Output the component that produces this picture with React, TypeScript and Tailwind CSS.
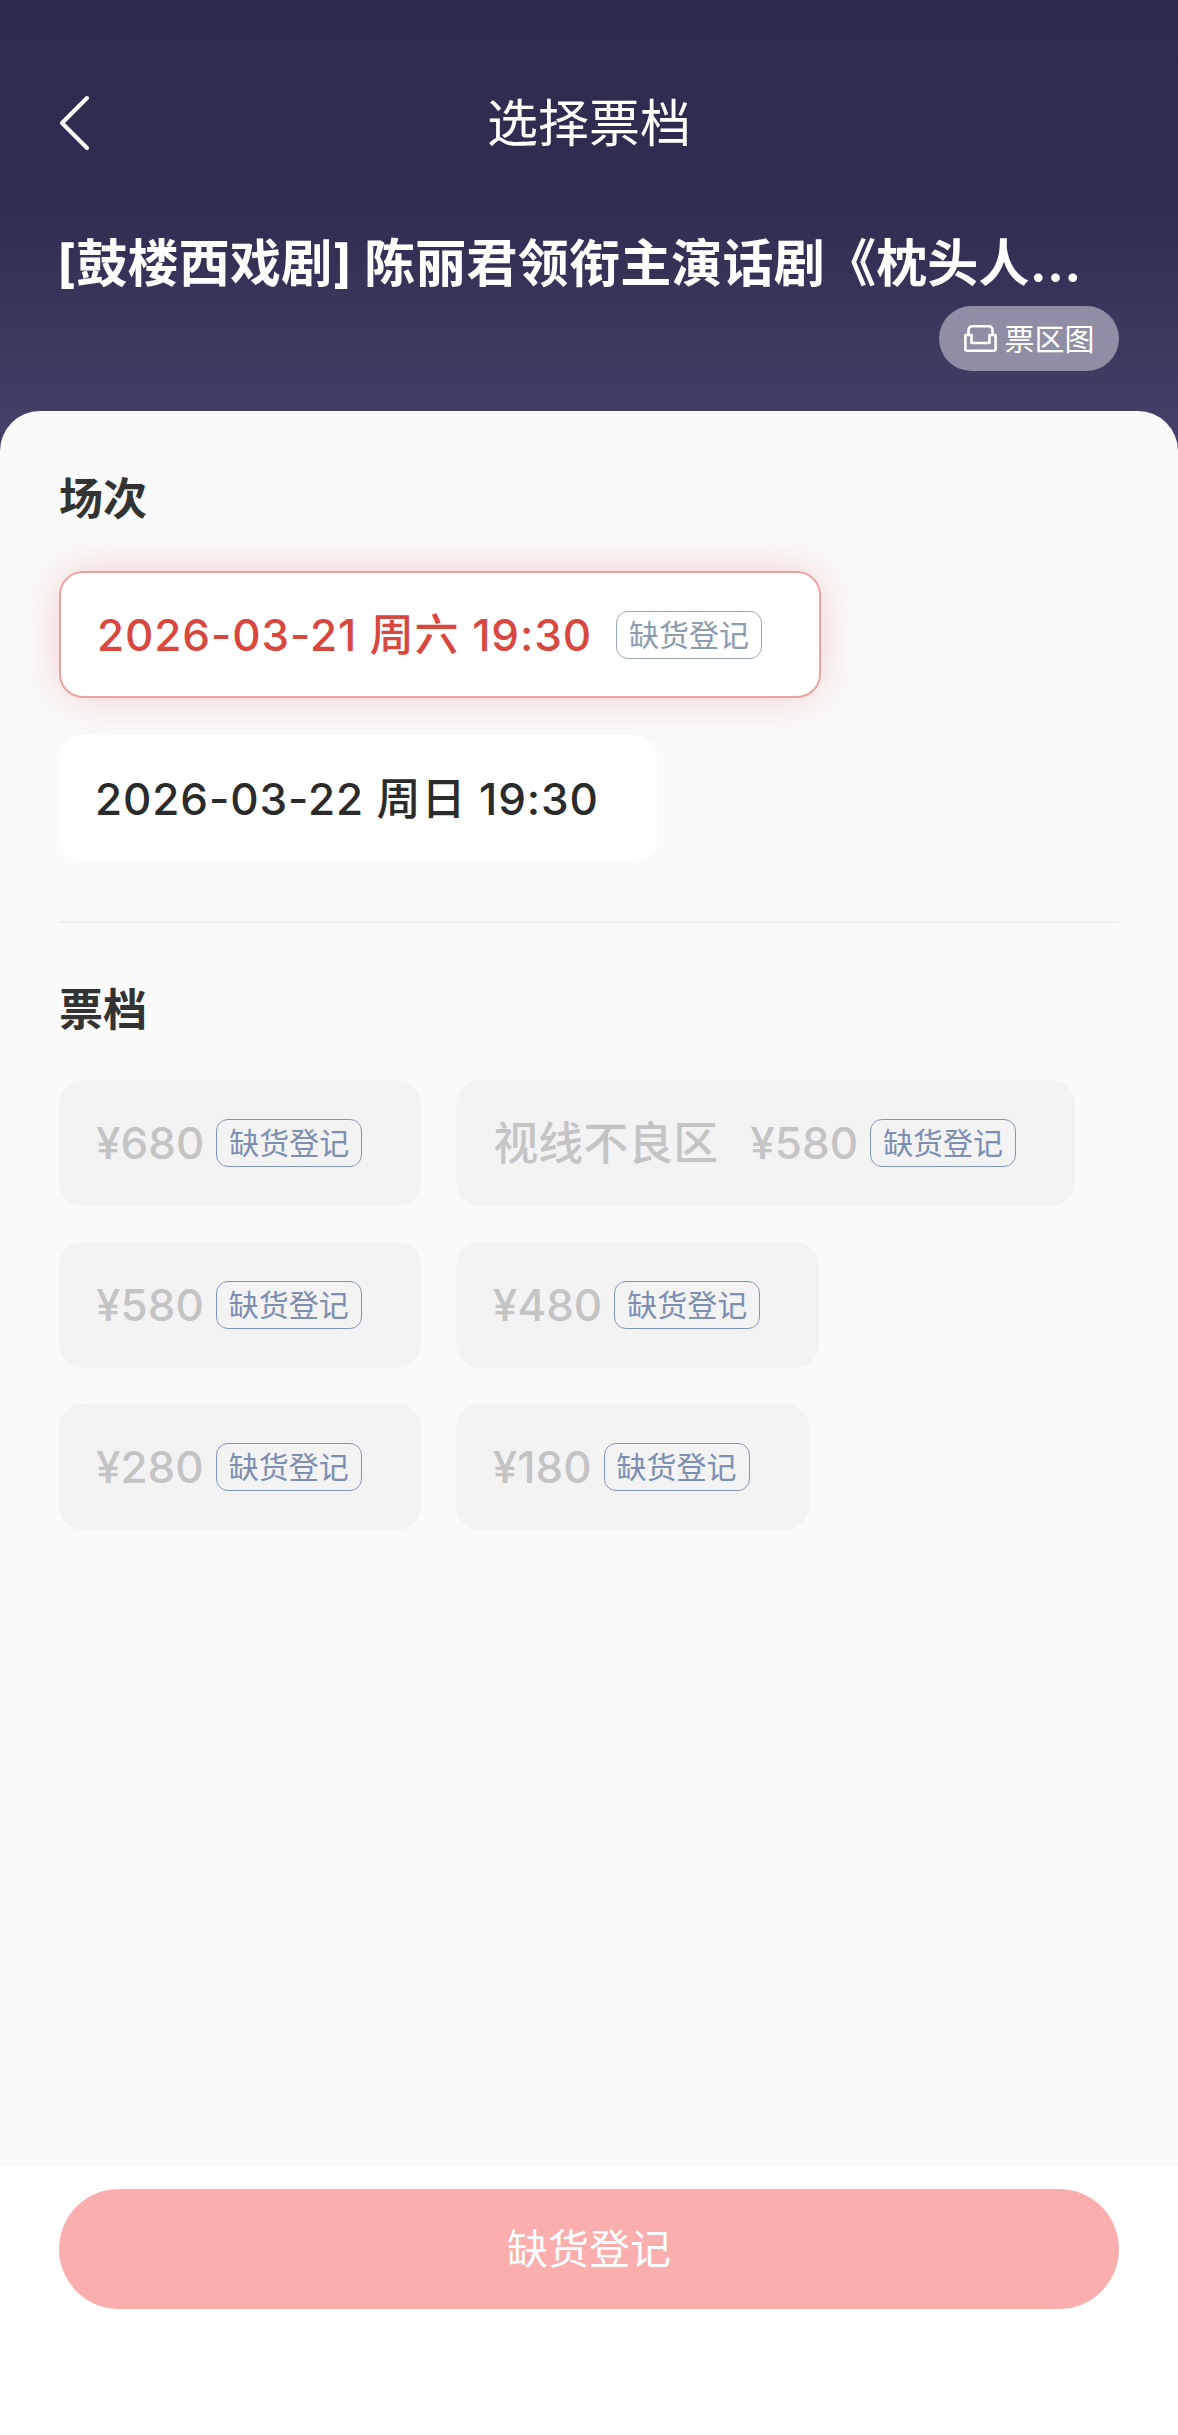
const FONT = "font-['Inter','Noto_Sans_CJK_SC',sans-serif]";

const tickets = [
  [{ label: '¥680' }, { label: '¥580', area: '视线不良区' }],
  [{ label: '¥580' }, { label: '¥480' }],
  [{ label: '¥280' }, { label: '¥180' }],
];

function Badge({ muted }: { muted?: boolean }) {
  return (
    <span
      className={
        muted
          ? 'flex h-[48px] w-[146px] shrink-0 items-center justify-center rounded-[12px] border border-[#9aa7b6] text-[30px] leading-none font-normal tracking-normal text-[#8b9bb0]'
          : 'flex h-[48px] w-[146px] shrink-0 items-center justify-center rounded-[12px] border border-[#8595b8] text-[30px] leading-none font-normal tracking-normal text-[#7d8fb0]'
      }
    >
      缺货登记
    </span>
  );
}

function BackIcon() {
  return (
    <svg width="32" height="56" viewBox="0 0 32 56" fill="none" stroke="white" strokeWidth="4" strokeLinecap="round" strokeLinejoin="round">
      <path d="M29 3 L4 28 L29 53" />
    </svg>
  );
}

function SofaIcon() {
  return (
    <svg width="33" height="27" viewBox="0 0 33 27" fill="none" stroke="white" strokeWidth="2.6" strokeLinecap="round" strokeLinejoin="round">
      <path d="M4.5 8V5a3.7 3.7 0 0 1 3.7-3.7h16.6A3.7 3.7 0 0 1 28.5 5v3" />
      <path d="M7.5 18V10H1.4v14a1.7 1.7 0 0 0 1.7 1.7h26.8a1.7 1.7 0 0 0 1.7-1.7V10h-6.1v8H7.5z" />
    </svg>
  );
}

export default function App() {
  return (
    <div className={`${FONT} flex h-[2435px] w-[1178px] flex-col overflow-hidden bg-white bg-[linear-gradient(180deg,#2e2c4e_0%,#2f2d50_45%,#46436b_100%)] bg-[length:100%_460px] bg-no-repeat`}>
      <header className="flex h-[411px] shrink-0 flex-col px-[59px] text-white">
        <div className="relative mt-[97px] flex h-[52px] items-center justify-center">
          <span className="absolute left-[-1px] top-[-2px]"><BackIcon /></span>
          <h1 className="text-[51px] leading-none font-normal">选择票档</h1>
        </div>
        <p className="mt-[85px] ml-[-2px] text-[51px] leading-[60px] font-bold tracking-[0.2px] whitespace-nowrap">
          [鼓楼西戏剧] 陈丽君领衔主演话剧《枕头人...
        </p>
        <div className="mt-[12px] flex justify-end">
          <div className="flex h-[65px] w-[180px] items-center justify-center gap-[8px] rounded-full bg-[#8f8ea4] text-[30px] leading-none">
            <SofaIcon />
            <span>票区图</span>
          </div>
        </div>
      </header>

      <main className="flex-1 rounded-t-[40px] bg-[#fafafa] px-[59px] pt-[63px]">
        <h2 className="text-[44px] leading-[50px] font-bold text-[#333333]">场次</h2>

        <div className="mt-[47px] flex flex-col items-start gap-[37px]">
          <div className="flex h-[127px] w-[762px] items-center rounded-[24px] border-2 border-[#e8a4a2] bg-white pl-[36px] shadow-[0_0_40px_rgba(226,90,80,0.26)]">
            <span className="text-[44px] leading-none font-medium tracking-[0.9px] text-[#d9483f]">2026-03-21 周六 19:30</span>
            <span className="ml-[24px]"><Badge muted /></span>
          </div>
          <div className="flex h-[127px] w-[598px] items-center rounded-[24px] bg-white pl-[36px]">
            <span className="text-[44px] leading-none font-medium tracking-[0.9px] text-[#2b2b2b]">2026-03-22 周日 19:30</span>
          </div>
        </div>

        <div className="mt-[59px] h-[2px] bg-[#f0f0f0]" />

        <h2 className="mt-[62px] text-[44px] leading-[50px] font-bold text-[#333333]">票档</h2>

        <div className="mt-[45px] flex flex-col gap-[36px]">
          {tickets.map((row, i) => (
            <div key={i} className="flex gap-[35px]">
              {row.map((t, j) => (
                <div key={j} className="flex h-[126px] items-center gap-[12px] rounded-[24px] bg-[#f3f3f4] pl-[37px] pr-[59px] text-[45px] leading-none font-medium text-[#c4c4c4]">
                  {t.area && <span className="mr-[20px]">{t.area}</span>}
                  <span className="text-[44px]">{t.label}</span>
                  <Badge />
                </div>
              ))}
            </div>
          ))}
        </div>
      </main>

      <footer className="h-[269px] shrink-0 bg-white px-[59px] pt-[23px]">
        <button className="flex h-[120px] w-full items-center justify-center rounded-[60px] bg-[#fbaeae] text-[41px] leading-none text-white">
          缺货登记
        </button>
      </footer>
    </div>
  );
}
